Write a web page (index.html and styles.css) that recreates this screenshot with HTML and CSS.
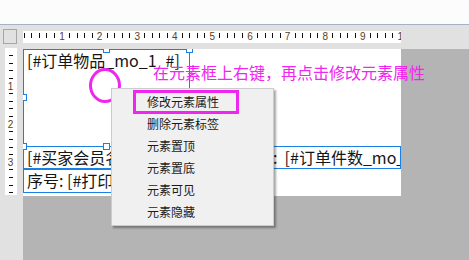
FILE: index.html
```html
<!DOCTYPE html>
<html lang="zh-CN">
<head>
<meta charset="utf-8">
<title>报表设计</title>
<link rel="stylesheet" href="styles.css">
</head>
<body>
<div class="app">
  <div class="titlebar"></div>
  <div class="work">
    <div class="corner"><div class="corner-box"></div></div>
    <div class="hruler">
      <svg class="ruler-svg" width="378" height="12" viewBox="0 0 378 12">
        <path class="ticks" d="M1.5 2v5M8.5 2v5M16.5 2v5M23.5 2v5M31.5 2v5M46.5 2v5M54.5 2v5M61.5 2v5M69.5 2v5M84.5 2v5M91.5 2v5M99.5 2v5M106.5 2v5M121.5 2v5M129.5 2v5M136.5 2v5M144.5 2v5M159.5 2v5M166.5 2v5M174.5 2v5M181.5 2v5M196.5 2v5M204.5 2v5M211.5 2v5M219.5 2v5M234.5 2v5M242.5 2v5M249.5 2v5M257.5 2v5M272.5 2v5M279.5 2v5M287.5 2v5M294.5 2v5M309.5 2v5M317.5 2v5M324.5 2v5M332.5 2v5M347.5 2v5M354.5 2v5M362.5 2v5M369.5 2v5"/>
        <g class="nums">
          <text x="39" y="9">1</text>
          <text x="76.6" y="9">2</text>
          <text x="114.2" y="9">3</text>
          <text x="151.8" y="9">4</text>
          <text x="189.4" y="9">5</text>
          <text x="227" y="9">6</text>
          <text x="264.6" y="9">7</text>
          <text x="302.2" y="9">8</text>
          <text x="339.8" y="9">9</text>
          <text x="380" y="9">10</text>
        </g>
      </svg>
    </div>
    <div class="vruler-cell">
      <svg class="ruler-svg vruler" width="12" height="147" viewBox="0 0 12 147">
        <path class="ticks" d="M4 7.5h4M4 15.5h4M4 22.5h4M4 30.5h4M4 45.5h4M4 53.5h4M4 60.5h4M4 68.5h4M4 83.5h4M4 91.5h4M4 99.5h4M4 106.5h4M4 121.5h4M4 129.5h4M4 137.5h4M4 144.5h4"/>
        <g class="nums">
          <text x="5.5" y="41.5">1</text>
          <text x="5.5" y="79.5">2</text>
          <text x="5.5" y="117.5">3</text>
        </g>
      </svg>
    </div>
    <div class="pasteboard">
      <div class="canvas">
        <div class="el el-goods">[#订单物品_mo_1_#]</div>
        <div class="el el-buyer">[#买家会员名_mo_2_#]</div>
        <div class="el el-count">:&nbsp; [#订单件数_mo_3_#]</div>
        <div class="el el-serial">序号: [#打印序号_mo_4_#]</div>
        <span class="handle h-tm"></span>
        <span class="handle h-tr"></span>
        <span class="handle h-ml"></span>
        <span class="handle h-bl"></span>
        <span class="handle h-bm"></span>
      </div>
    </div>
  </div>

  <div class="note">在元素框上右键，再点击修改元素属性</div>
  <div class="click-ring"></div>

  <ul class="menu">
    <li class="menu-item">修改元素属性</li>
    <li class="menu-item">删除元素标签</li>
    <li class="menu-item">元素置顶</li>
    <li class="menu-item">元素置底</li>
    <li class="menu-item">元素可见</li>
    <li class="menu-item">元素隐藏</li>
  </ul>
  <div class="mark"></div>
</div>
</body>
</html>
```

FILE: styles.css
```css
html, body {
  margin: 0;
  padding: 0;
}

body {
  width: 469px;
  height: 260px;
  overflow: hidden;
  background: #e1e1e1;
  font-family: "Noto Sans CJK SC", "Noto Sans", sans-serif;
}

.app {
  position: relative;
  width: 469px;
  height: 260px;
}

.titlebar {
  height: 24px;
  background: #fcfcfc;
  border-bottom: 1px solid #a3b3c3;
}

.work {
  display: grid;
  grid-template-columns: 23px 1fr;
  grid-template-rows: 24px 1fr;
  height: 235px;
}

.corner {
  padding: 4px 0 0 3px;
}

.corner-box {
  width: 12px;
  height: 13px;
  border: 1px solid #a6a6a6;
  background: #e1e1e1;
}

.hruler {
  padding-top: 6px;
}

.ruler-svg {
  display: block;
  background: #ffffff;
  overflow: hidden;
}

.ticks {
  stroke: #111111;
  stroke-width: 1;
  fill: none;
}

.nums text {
  font-family: "Liberation Sans", Arial, sans-serif;
  font-size: 10px;
  fill: #5a3d1c;
  text-anchor: middle;
}

.vruler-cell {
  padding-left: 5px;
  margin-top: -1px;
}

.pasteboard {
  background: #b4b4b4;
}

.canvas {
  position: relative;
  width: 378px;
  height: 147px;
  background: #ffffff;
  overflow: hidden;
}

.el {
  position: absolute;
  box-sizing: border-box;
  border: 1px solid #1a80e4;
  padding-left: 3px;
  font-size: 16px;
  line-height: 20px;
  color: #151515;
  white-space: nowrap;
  overflow: hidden;
}

.el-goods {
  left: 0;
  top: 0;
  width: 167px;
  height: 98px;
}

.el-buyer {
  left: 0;
  top: 97px;
  width: 231px;
  height: 23px;
}

.el-count {
  left: 230px;
  top: 97px;
  width: 148px;
  height: 23px;
  padding-left: 19px;
}

.el-serial {
  left: 0;
  top: 120px;
  width: 231px;
  height: 24px;
}

.handle {
  position: absolute;
  box-sizing: border-box;
  width: 7px;
  height: 7px;
  border: 1px solid #1a80e4;
  background: #ffffff;
}

.h-tm { left: 80px; top: -3px; }
.h-tr { left: 163px; top: -3px; }
.h-ml { left: -3px; top: 45px; }
.h-bl { left: -3px; top: 94px; }
.h-bm { left: 80px; top: 94px; }

.note {
  position: absolute;
  left: 153px;
  top: 62px;
  font-size: 16px;
  line-height: 20px;
  color: #f025ef;
  white-space: nowrap;
}

.click-ring {
  position: absolute;
  left: 89px;
  top: 68px;
  width: 26px;
  height: 29px;
  border: 3px solid #f025ef;
  border-radius: 50%;
}

.menu {
  position: absolute;
  left: 111px;
  top: 88px;
  box-sizing: border-box;
  width: 163px;
  height: 138px;
  margin: 0;
  padding: 2px 0;
  list-style: none;
  background: #f0f0f0;
  border: 1px solid #cccccc;
  box-shadow: 2px 2px 2px rgba(0, 0, 0, 0.35);
}

.menu-item {
  height: 22px;
  line-height: 22px;
  padding-left: 35px;
  font-size: 12px;
  color: #1a1a1a;
  white-space: nowrap;
}

.mark {
  position: absolute;
  left: 133px;
  top: 90px;
  width: 100px;
  height: 18px;
  border: 3px solid #f025ef;
}
```
